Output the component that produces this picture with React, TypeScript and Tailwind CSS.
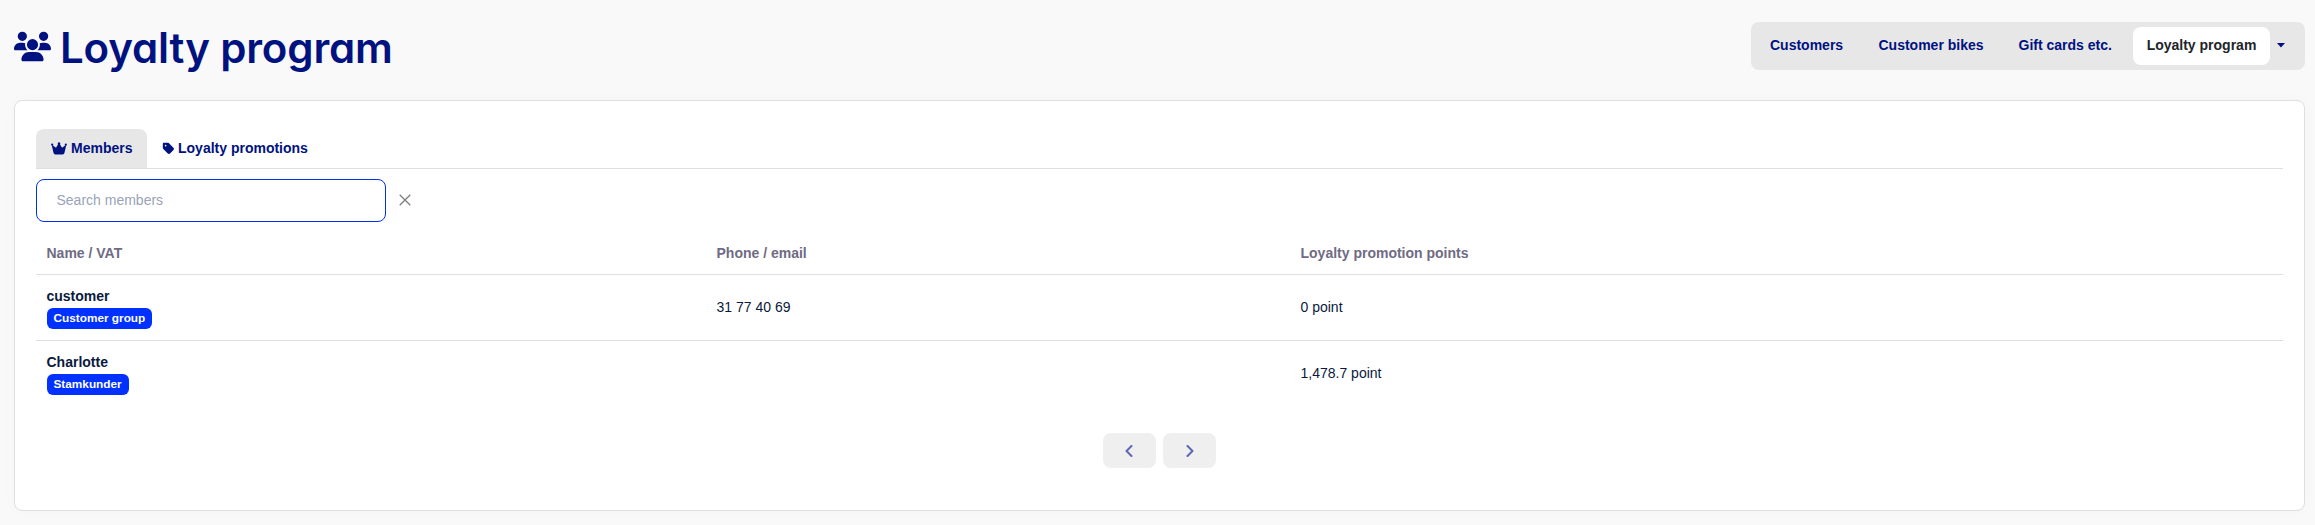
import React from "react";
import { FaUsers, FaTag } from "react-icons/fa6";

const rows = [
  { name: "customer", group: "Customer group", phone: "31 77 40 69", points: "0 point" },
  { name: "Charlotte", group: "Stamkunder", phone: "", points: "1,478.7 point" },
];

const columns = "grid grid-cols-[670px_584px_1fr] pl-[10.5px]";

function Chevron({ d }: { d: string }) {
  return (
    <button className="flex h-[35px] w-[53px] items-center justify-center rounded-lg bg-[#efefef]">
      <svg width="12" height="12" viewBox="0 0 12 12" fill="none" stroke="#5c66b3" strokeWidth="2">
        <path d={d} strokeLinecap="round" strokeLinejoin="round" />
      </svg>
    </button>
  );
}

function Crown() {
  return (
    <svg className="mr-[4px]" width="16" height="13" viewBox="0 0 16 13" fill="currentColor">
      <circle cx="8" cy="1.4" r="1.2" />
      <circle cx="1.2" cy="2.6" r="1.1" />
      <circle cx="14.8" cy="2.6" r="1.1" />
      <path d="M.6 2.5L4.6 5.4Q5.2 5.7 5.5 5L7.4 1.5h1.2L10.500 5Q10.800 5.700 11.400 5.400L15.400 2.500 13.500 10.800Q13.200 12.400 11.600 12.400H4.400Q2.800 12.400 2.500 10.800Z" />
    </svg>
  );
}

export default function App() {
  return (
    <div className="h-[525px] bg-[#f9f9f9] px-[14px] pr-[10px] font-['Liberation_Sans',Arial,sans-serif] text-[14px] leading-[21px] text-[#0a1a3c]">
      <header className="flex h-[100px] items-start justify-between">
        <h1 className="flex items-start pt-[20px] text-[#001280]">
          <FaUsers className="mt-[9px] h-[35px] w-[37px]" />
          <span className="ml-[9px] whitespace-nowrap pt-px font-['Inter',sans-serif] text-[42px] font-semibold leading-[54px] tracking-[-0.14px] [font-feature-settings:'cv11']">
            Loyalty program
          </span>
        </h1>
        <nav className="mt-[22px] flex h-[48px] w-[554px] items-center rounded-lg bg-[#e7e7e7] pl-[19px] font-bold text-[#001280]">
          <a className="w-[108.500px] pb-px">Customers</a>
          <a className="w-[140px] pb-px">Customer bikes</a>
          <a className="w-[114.500px] pb-px">Gift cards etc.</a>
          <a className="flex h-[38px] w-[137px] items-center justify-center rounded-lg bg-white pb-px text-[#212529]">Loyalty program</a>
          <svg className="mb-px ml-[7px]" width="8" height="5" viewBox="0 0 8 5"><path d="M0 0h8L4 4.500z" fill="#001280" /></svg>
        </nav>
      </header>
      <main className="h-[411px] rounded-lg border border-[#dedfe1] bg-white px-[21px] pt-[28px] shadow-[0_0_16px_rgba(0,0,0,0.025)]">
        <div className="flex h-[40px] border-b border-[#dedfe1] font-bold text-[#001280]">
          <div className="flex h-[39px] w-[111px] items-center rounded-t-lg bg-[#e7e7e7] pb-px pl-[15px]">
            <Crown />Members
          </div>
          <div className="flex h-[39px] items-center pb-px pl-[14.500px]">
            <FaTag className="mr-[3.500px] h-[13px] w-[13px]" />Loyalty promotions
          </div>
        </div>
        <div className="mt-[10px] flex items-center">
          <input placeholder="Search members" className="h-[43px] w-[350px] rounded-lg border border-[#0031e6] pb-[2px] pl-[19.500px] outline-none placeholder:text-[#9aa3b8]" />
          <svg className="mb-[2px] ml-[13px]" width="12" height="12" viewBox="0 0 12 12" stroke="#7c7c7c" strokeWidth="1.3"><path d="M.7.7l10.6 10.6M11.3.7L.7 11.3" /></svg>
        </div>
        <div className={`${columns} h-[53px] items-center border-b border-[#dedfe1] pt-[10px] font-bold text-[#6f6b83]`}>
          <span>Name / VAT</span>
          <span>Phone / email</span>
          <span>Loyalty promotion points</span>
        </div>
        {rows.map((r, i) => (
          <div key={r.name} className={`${columns} items-center ${i === 0 ? "h-[66px] border-b border-[#dedfe1]" : "h-[64px]"}`}>
            <div>
              <div className="font-bold">{r.name}</div>
              <span className="mt-px flex h-[21px] w-fit items-center rounded-md bg-[#0031ff] px-[7px] pb-px text-[11.800px] font-bold leading-[20px] text-white">{r.group}</span>
            </div>
            <span>{r.phone}</span>
            <span>{r.points}</span>
          </div>
        ))}
        <div className="mt-[28px] flex justify-center gap-[7px]">
          <Chevron d="M7.500 1L2.500 6l5 5" />
          <Chevron d="M3.500 1l5 5-5 5" />
        </div>
      </main>
    </div>
  );
}
